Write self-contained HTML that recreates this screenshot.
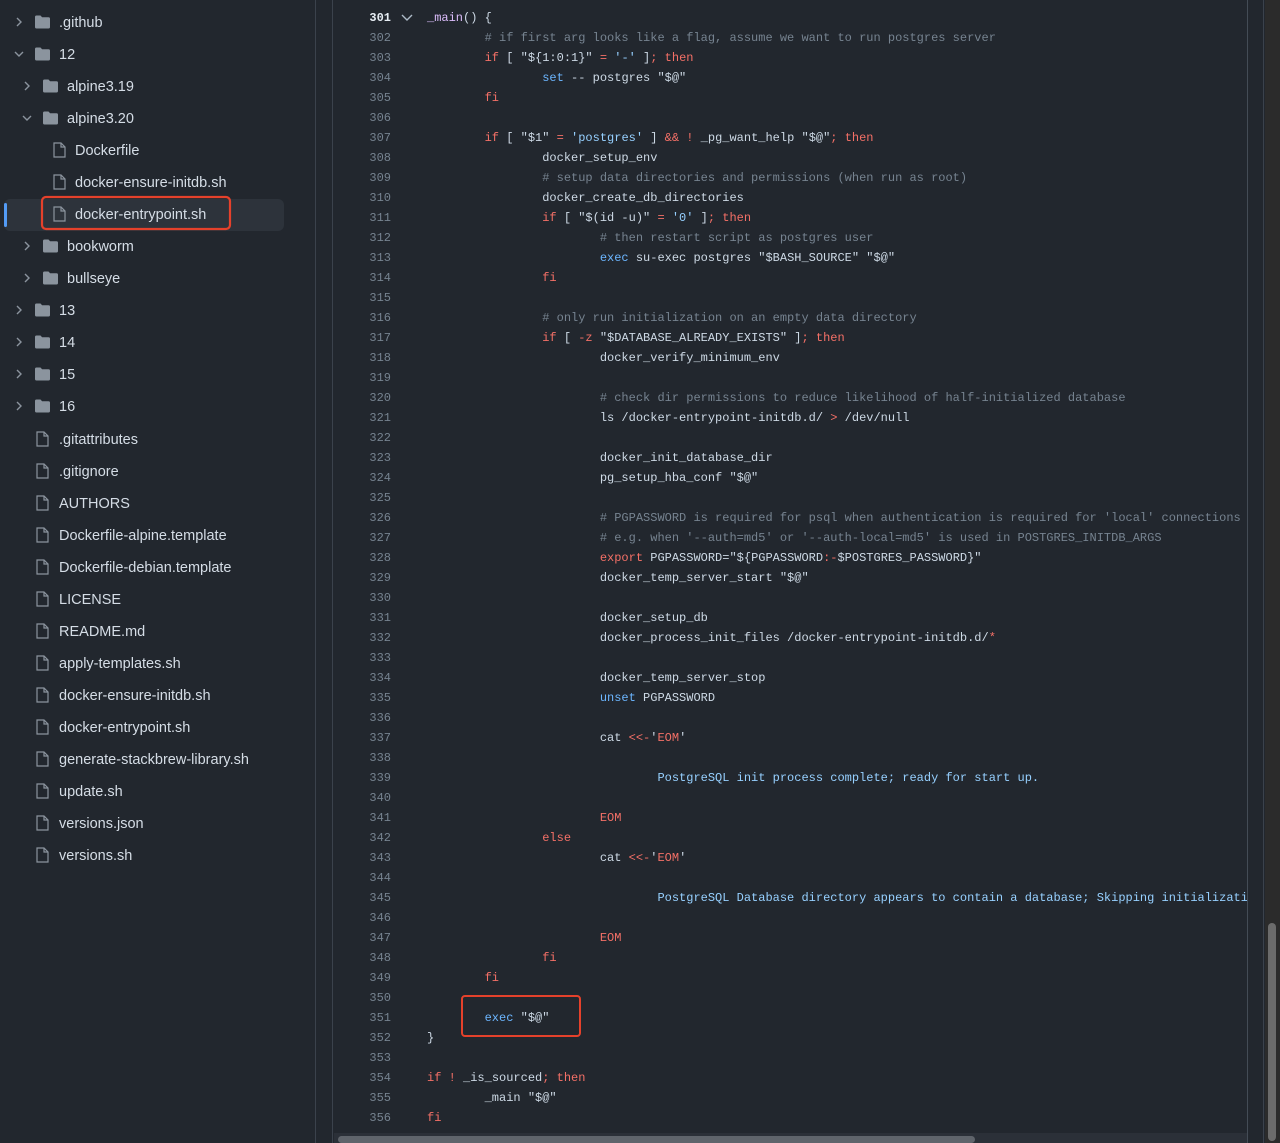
<!DOCTYPE html>
<html><head><meta charset="utf-8"><style>
*{margin:0;padding:0;box-sizing:border-box}
body{width:1280px;height:1143px;background:#22272e;overflow:hidden;position:relative;font-family:"Liberation Sans",sans-serif}
.side{position:absolute;left:0;top:0;width:316px;height:1143px;background:#22272e;border-right:1px solid #3b424c}
.gap{position:absolute;left:317px;top:0;width:16px;height:1143px;background:#22272e;border-right:1px solid #3b424c}
.row{position:absolute;height:32px;line-height:32px;font-size:14.5px;color:#d5dde6;white-space:nowrap;margin-top:1px}
.code{position:absolute;left:334px;top:1px;width:913px;height:1132px;background:#22272e;overflow:hidden;font-family:"Liberation Mono",monospace;font-size:12px;color:#cdd9e5}
.ln{position:absolute;left:0;width:57px;text-align:right;color:#768390;height:20px;line-height:20px}
.cl{position:absolute;left:93px;height:20px;line-height:20px;white-space:pre}
.k{color:#f47067}.c{color:#768390}.s{color:#96d0ff}.b{color:#6cb6ff}.f{color:#dcbdfb}
</style></head><body>
<div class="side">
<svg width="316" height="900" style="position:absolute;left:0;top:0" fill="#8b949e" stroke="#8b949e">
<defs>
<g id="fo"><path d="M0 3a1.5 1.5 0 0 1 1.5-1.5h4l1.6 1.8h6.4a1.5 1.5 0 0 1 1.5 1.5v8.2a1.5 1.5 0 0 1-1.5 1.5h-12A1.5 1.5 0 0 1 0 13z" stroke="none"/></g>
<g id="fi"><path d="M1 1h7l4 4v10H1z" fill="none" stroke-width="1.2"/><path d="M8 1v4h4" fill="none" stroke-width="1.2"/></g>
</defs>
<rect x="4" y="199" width="280" height="32" rx="6" fill="#2d333b" stroke="none"/>
<rect x="4" y="203" width="3" height="24" rx="1.5" fill="#539bf5" stroke="none"/>
<use href="#fo" x="35" y="14"/><use href="#fo" x="35" y="46"/>
<use href="#fo" x="43" y="78"/><use href="#fo" x="43" y="110"/>
<use href="#fi" x="53" y="142"/><use href="#fi" x="53" y="174"/><use href="#fi" x="53" y="206"/>
<use href="#fo" x="43" y="238"/><use href="#fo" x="43" y="270"/>
<use href="#fo" x="35" y="302"/><use href="#fo" x="35" y="334"/><use href="#fo" x="35" y="366"/><use href="#fo" x="35" y="398"/>
<use href="#fi" x="36" y="431"/><use href="#fi" x="36" y="463"/><use href="#fi" x="36" y="495"/><use href="#fi" x="36" y="527"/><use href="#fi" x="36" y="559"/><use href="#fi" x="36" y="591"/><use href="#fi" x="36" y="623"/><use href="#fi" x="36" y="655"/><use href="#fi" x="36" y="687"/><use href="#fi" x="36" y="719"/><use href="#fi" x="36" y="751"/><use href="#fi" x="36" y="783"/><use href="#fi" x="36" y="815"/><use href="#fi" x="36" y="847"/>
<g fill="none" stroke-width="1.4">
<path d="M17 18l4 4-4 4"/><path d="M15 52l4 4 4-4"/><path d="M25 82l4 4-4 4"/><path d="M23 116l4 4 4-4"/>
<path d="M25 242l4 4-4 4"/><path d="M25 274l4 4-4 4"/>
<path d="M17 306l4 4-4 4"/><path d="M17 338l4 4-4 4"/><path d="M17 370l4 4-4 4"/><path d="M17 402l4 4-4 4"/>
</g>
<rect x="42" y="197" width="188" height="32" rx="4" fill="none" stroke="#e5412b" stroke-width="2.2"/>
</svg>
<div class="row" style="left:59px;top:6px">.github</div>
<div class="row" style="left:59px;top:38px">12</div>
<div class="row" style="left:67px;top:70px">alpine3.19</div>
<div class="row" style="left:67px;top:102px">alpine3.20</div>
<div class="row" style="left:75px;top:134px">Dockerfile</div>
<div class="row" style="left:75px;top:166px">docker-ensure-initdb.sh</div>
<div class="row" style="left:75px;top:198px">docker-entrypoint.sh</div>
<div class="row" style="left:67px;top:230px">bookworm</div>
<div class="row" style="left:67px;top:262px">bullseye</div>
<div class="row" style="left:59px;top:294px">13</div>
<div class="row" style="left:59px;top:326px">14</div>
<div class="row" style="left:59px;top:358px">15</div>
<div class="row" style="left:59px;top:390px">16</div>
<div class="row" style="left:59px;top:423px">.gitattributes</div>
<div class="row" style="left:59px;top:455px">.gitignore</div>
<div class="row" style="left:59px;top:487px">AUTHORS</div>
<div class="row" style="left:59px;top:519px">Dockerfile-alpine.template</div>
<div class="row" style="left:59px;top:551px">Dockerfile-debian.template</div>
<div class="row" style="left:59px;top:583px">LICENSE</div>
<div class="row" style="left:59px;top:615px">README.md</div>
<div class="row" style="left:59px;top:647px">apply-templates.sh</div>
<div class="row" style="left:59px;top:679px">docker-ensure-initdb.sh</div>
<div class="row" style="left:59px;top:711px">docker-entrypoint.sh</div>
<div class="row" style="left:59px;top:743px">generate-stackbrew-library.sh</div>
<div class="row" style="left:59px;top:775px">update.sh</div>
<div class="row" style="left:59px;top:807px">versions.json</div>
<div class="row" style="left:59px;top:839px">versions.sh</div>
</div>
<div class="gap"></div>
<div class="code">
<div class="ln" style="top:-13px">300</div>
<div class="ln" style="top:7px;color:#e6edf3;font-weight:bold">301</div>
<svg style="position:absolute;left:67px;top:13px" width="12" height="8"><path d="M1 1l5 5 5-5" fill="none" stroke="#adbac7" stroke-width="1.4"/></svg>
<div class="cl" style="top:7px"><span class="f">_main</span>() {</div>
<div class="ln" style="top:27px">302</div><div class="cl" style="top:27px">        <span class="c"># if first arg looks like a flag, assume we want to run postgres server</span></div>
<div class="ln" style="top:47px">303</div><div class="cl" style="top:47px">        <span class="k">if</span> [ "${1:0:1}" <span class="k">=</span> <span class="s">'-'</span> ]<span class="k">;</span> <span class="k">then</span></div>
<div class="ln" style="top:67px">304</div><div class="cl" style="top:67px">                <span class="b">set</span> -- postgres "$@"</div>
<div class="ln" style="top:87px">305</div><div class="cl" style="top:87px">        <span class="k">fi</span></div>
<div class="ln" style="top:107px">306</div>
<div class="ln" style="top:127px">307</div><div class="cl" style="top:127px">        <span class="k">if</span> [ "$1" <span class="k">=</span> <span class="s">'postgres'</span> ] <span class="k">&amp;&amp;</span> <span class="k">!</span> _pg_want_help "$@"<span class="k">;</span> <span class="k">then</span></div>
<div class="ln" style="top:147px">308</div><div class="cl" style="top:147px">                docker_setup_env</div>
<div class="ln" style="top:167px">309</div><div class="cl" style="top:167px">                <span class="c"># setup data directories and permissions (when run as root)</span></div>
<div class="ln" style="top:187px">310</div><div class="cl" style="top:187px">                docker_create_db_directories</div>
<div class="ln" style="top:207px">311</div><div class="cl" style="top:207px">                <span class="k">if</span> [ "$(id -u)" <span class="k">=</span> <span class="s">'0'</span> ]<span class="k">;</span> <span class="k">then</span></div>
<div class="ln" style="top:227px">312</div><div class="cl" style="top:227px">                        <span class="c"># then restart script as postgres user</span></div>
<div class="ln" style="top:247px">313</div><div class="cl" style="top:247px">                        <span class="b">exec</span> su-exec postgres "$BASH_SOURCE" "$@"</div>
<div class="ln" style="top:267px">314</div><div class="cl" style="top:267px">                <span class="k">fi</span></div>
<div class="ln" style="top:287px">315</div>
<div class="ln" style="top:307px">316</div><div class="cl" style="top:307px">                <span class="c"># only run initialization on an empty data directory</span></div>
<div class="ln" style="top:327px">317</div><div class="cl" style="top:327px">                <span class="k">if</span> [ <span class="k">-z</span> "$DATABASE_ALREADY_EXISTS" ]<span class="k">;</span> <span class="k">then</span></div>
<div class="ln" style="top:347px">318</div><div class="cl" style="top:347px">                        docker_verify_minimum_env</div>
<div class="ln" style="top:367px">319</div>
<div class="ln" style="top:387px">320</div><div class="cl" style="top:387px">                        <span class="c"># check dir permissions to reduce likelihood of half-initialized database</span></div>
<div class="ln" style="top:407px">321</div><div class="cl" style="top:407px">                        ls /docker-entrypoint-initdb.d/ <span class="k">&gt;</span> /dev/null</div>
<div class="ln" style="top:427px">322</div>
<div class="ln" style="top:447px">323</div><div class="cl" style="top:447px">                        docker_init_database_dir</div>
<div class="ln" style="top:467px">324</div><div class="cl" style="top:467px">                        pg_setup_hba_conf "$@"</div>
<div class="ln" style="top:487px">325</div>
<div class="ln" style="top:507px">326</div><div class="cl" style="top:507px">                        <span class="c"># PGPASSWORD is required for psql when authentication is required for 'local' connections via pg_hba.conf</span></div>
<div class="ln" style="top:527px">327</div><div class="cl" style="top:527px">                        <span class="c"># e.g. when '--auth=md5' or '--auth-local=md5' is used in POSTGRES_INITDB_ARGS</span></div>
<div class="ln" style="top:547px">328</div><div class="cl" style="top:547px">                        <span class="k">export</span> PGPASSWORD="${PGPASSWORD<span class="k">:-</span>$POSTGRES_PASSWORD}"</div>
<div class="ln" style="top:567px">329</div><div class="cl" style="top:567px">                        docker_temp_server_start "$@"</div>
<div class="ln" style="top:587px">330</div>
<div class="ln" style="top:607px">331</div><div class="cl" style="top:607px">                        docker_setup_db</div>
<div class="ln" style="top:627px">332</div><div class="cl" style="top:627px">                        docker_process_init_files /docker-entrypoint-initdb.d/<span class="k">*</span></div>
<div class="ln" style="top:647px">333</div>
<div class="ln" style="top:667px">334</div><div class="cl" style="top:667px">                        docker_temp_server_stop</div>
<div class="ln" style="top:687px">335</div><div class="cl" style="top:687px">                        <span class="b">unset</span> PGPASSWORD</div>
<div class="ln" style="top:707px">336</div>
<div class="ln" style="top:727px">337</div><div class="cl" style="top:727px">                        cat <span class="k">&lt;&lt;-</span>'<span class="k">EOM</span>'</div>
<div class="ln" style="top:747px">338</div>
<div class="ln" style="top:767px">339</div><div class="cl" style="top:767px"><span class="s">                                PostgreSQL init process complete; ready for start up.</span></div>
<div class="ln" style="top:787px">340</div>
<div class="ln" style="top:807px">341</div><div class="cl" style="top:807px">                        <span class="k">EOM</span></div>
<div class="ln" style="top:827px">342</div><div class="cl" style="top:827px">                <span class="k">else</span></div>
<div class="ln" style="top:847px">343</div><div class="cl" style="top:847px">                        cat <span class="k">&lt;&lt;-</span>'<span class="k">EOM</span>'</div>
<div class="ln" style="top:867px">344</div>
<div class="ln" style="top:887px">345</div><div class="cl" style="top:887px"><span class="s">                                PostgreSQL Database directory appears to contain a database; Skipping initialization</span></div>
<div class="ln" style="top:907px">346</div>
<div class="ln" style="top:927px">347</div><div class="cl" style="top:927px">                        <span class="k">EOM</span></div>
<div class="ln" style="top:947px">348</div><div class="cl" style="top:947px">                <span class="k">fi</span></div>
<div class="ln" style="top:967px">349</div><div class="cl" style="top:967px">        <span class="k">fi</span></div>
<div class="ln" style="top:987px">350</div>
<div class="ln" style="top:1007px">351</div><div class="cl" style="top:1007px">        <span class="b">exec</span> "$@"</div>
<div class="ln" style="top:1027px">352</div><div class="cl" style="top:1027px">}</div>
<div class="ln" style="top:1047px">353</div>
<div class="ln" style="top:1067px">354</div><div class="cl" style="top:1067px"><span class="k">if</span> <span class="k">!</span> _is_sourced<span class="k">;</span> <span class="k">then</span></div>
<div class="ln" style="top:1087px">355</div><div class="cl" style="top:1087px">        _main "$@"</div>
<div class="ln" style="top:1107px">356</div><div class="cl" style="top:1107px"><span class="k">fi</span></div>
<div style="position:absolute;left:127px;top:994px;width:120px;height:42px;border:2.2px solid #e5412b;border-radius:4px"></div>
</div>
<div style="position:absolute;left:334px;top:1133px;width:913px;height:10px;background:#2b3038"></div>
<div style="position:absolute;left:338px;top:1136px;width:637px;height:7px;border-radius:4px;background:#5f646b"></div>
<div style="position:absolute;left:1247px;top:0;width:1px;height:1143px;background:#444c56"></div>
<div style="position:absolute;left:1248px;top:0;width:16px;height:1143px;background:#22272e;border-right:1px solid #3b424c"></div>
<div style="position:absolute;left:1265px;top:0;width:15px;height:1143px;background:#2b2b2b"></div>
<div style="position:absolute;left:1268px;top:923px;width:8px;height:218px;border-radius:4px;background:#6b6b6b"></div>
</body></html>
